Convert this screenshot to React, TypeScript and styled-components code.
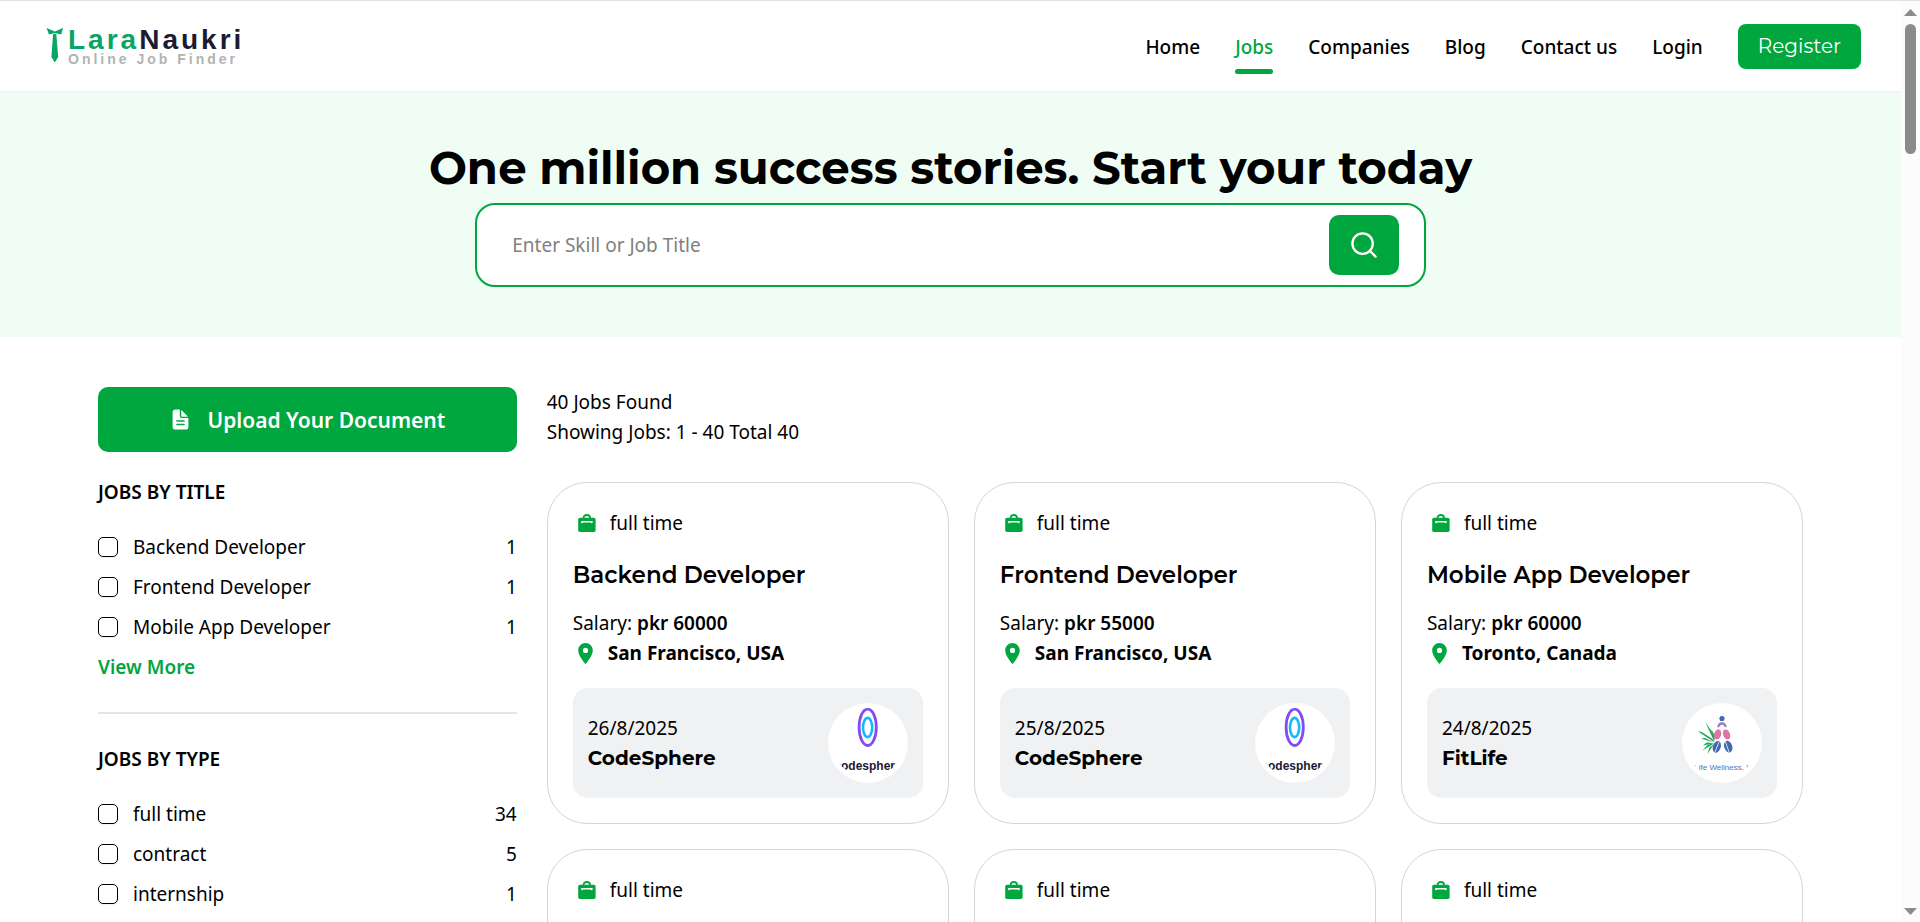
import React, { useId } from 'react';
import styled, { createGlobalStyle } from 'styled-components';
import { MdLocationOn } from 'react-icons/md';
import { IoDocumentText } from 'react-icons/io5';

const green = '#00a63e';
const display = 'Montserrat, Inter, sans-serif';

const GlobalStyle = createGlobalStyle`
  *, *::before, *::after { box-sizing: border-box; }
  body {
    margin: 0;
    background: #fff;
    color: #000;
    font: 400 19px/30px "Segoe UI", "Noto Sans", sans-serif;
  }
  h1, h2, h3, p, ul { margin: 0; padding: 0; }
  ul { list-style: none; }
  button, input { font: inherit; }
  button { border: 0; cursor: pointer; }
  a { color: inherit; text-decoration: none; }
`;

const Shell = styled.div`
  display: flex;
  height: 100vh;
  border-top: 1px solid #dbe5e0;
  overflow: hidden;
`;

const Page = styled.div`
  flex: 1;
  min-width: 0;
  overflow: hidden;
`;

const ScrollRail = styled.div`
  display: flex;
  flex-direction: column;
  align-items: center;
  width: 19px;
  padding: 8px 0 7px;
  background: #fcfcfc;
`;

const ScrollThumb = styled.div`
  width: 11px;
  height: 130px;
  margin: 8px 0 auto;
  border-radius: 6px;
  background: #8b8b8b;
`;

const Header = styled.header`
  display: flex;
  align-items: center;
  justify-content: space-between;
  height: 92px;
  padding: 0 40px 0 46px;
  border-bottom: 2px solid #f1f3f4;
`;

const Brand = styled.a`
  display: flex;
  gap: 4px;
  font-family: "Liberation Sans", Arial, sans-serif;
  font-weight: 700;
`;

const BrandWords = styled.span`
  display: flex;
  flex-direction: column;
`;

const BrandName = styled.span`
  color: #1b1b35;
  font-size: 28px;
  line-height: 26px;
  letter-spacing: 3px;

  em { color: #07a566; font-style: normal; }
`;

const BrandTagline = styled.span`
  color: #b3b3b3;
  font-size: 14px;
  line-height: 12px;
  letter-spacing: 3px;
`;

const Nav = styled.nav`
  display: flex;
  align-items: center;
  gap: 35px;
`;

const NavLink = styled.a<{ $active?: boolean }>`
  position: relative;
  padding-top: 2px;
  font-weight: 500;
  color: ${(p) => (p.$active ? green : '#000')};

  &::after {
    content: "";
    display: ${(p) => (p.$active ? 'block' : 'none')};
    position: absolute;
    inset: auto 0 -12px;
    height: 5px;
    border-radius: 3px;
    background: ${green};
  }
`;

const RegisterButton = styled.button`
  height: 45px;
  padding: 0 20px;
  border-radius: 8px;
  background: ${green};
  color: #fff;
  font-family: ${display};
  font-size: 20px;
`;

const Hero = styled.section`
  display: flex;
  flex-direction: column;
  align-items: center;
  gap: 10px;
  padding: 50px 0;
  background: #effdf4;
`;

const HeroTitle = styled.h1`
  font-family: ${display};
  font-size: 45px;
  font-weight: 700;
  line-height: 50px;
  text-align: center;
`;

const SearchBox = styled.form`
  display: flex;
  width: 50%;
  padding: 10px 25px 10px 35px;
  border: 2px solid ${green};
  border-radius: 20px;
  background: #fff;
`;

const SearchInput = styled.input`
  flex: 1;
  min-width: 0;
  padding: 0;
  border: 0;
  outline: 0;
  background: transparent;

  &::placeholder { color: #808080; opacity: 1; }
`;

const SearchButton = styled.button`
  display: grid;
  place-items: center;
  width: 70px;
  height: 60px;
  padding: 0;
  border-radius: 10px;
  background: ${green};
`;

const Main = styled.main`
  display: grid;
  grid-template-columns: minmax(0, 1fr) minmax(0, 3fr);
  gap: 30px;
  padding: 50px 98px;
`;

const Sidebar = styled.aside`
  display: flex;
  flex-direction: column;
  gap: 25px;
`;

const UploadButton = styled.button`
  display: flex;
  align-items: center;
  justify-content: center;
  gap: 15px;
  height: 65px;
  border-radius: 10px;
  background: ${green};
  color: #fff;
  font-size: 21px;
  font-weight: 600;
`;

const FilterGroup = styled.section`
  display: flex;
  flex-direction: column;
  gap: 25px;
`;

const FilterDivider = styled.hr`
  height: 2px;
  margin: 30px 0;
  border: 0;
  background: #e5e5e5;
`;

const FilterHeading = styled.h2`
  font-size: 19px;
  font-weight: 600;
  line-height: 30px;
`;

const FilterList = styled.ul`
  display: flex;
  flex-direction: column;
  gap: 10px;
`;

const FilterRow = styled.li`
  display: flex;
  align-items: center;
  gap: 15px;

  label { flex: 1; }
`;

const Checkbox = styled.input`
  appearance: none;
  width: 20px;
  height: 20px;
  margin: 0;
  border: 1px solid #000;
  border-radius: 5px;
  box-shadow: 0 1px 2px rgba(0, 0, 0, 0.06);

  &:checked { background: ${green}; }
`;

const ViewMore = styled.a`
  color: ${green};
  font-weight: 600;
`;

const Results = styled.section`
  display: flex;
  flex-direction: column;
  gap: 35px;
`;

const CardGrid = styled.div`
  display: grid;
  grid-template-columns: repeat(3, minmax(0, 1fr));
  grid-auto-rows: 1fr;
  gap: 25px;
`;

const Card = styled.article`
  padding: 25px;
  border: 1px solid #d1d5dc;
  border-radius: 40px;
`;

const JobType = styled.p`
  display: flex;
  align-items: center;
  gap: 14px;
  padding-left: 5px;
`;

const JobTitle = styled.h3`
  margin: 22px 0 18px;
  font-family: ${display};
  font-size: 23px;
  font-weight: 600;
  line-height: 30px;
`;

const Salary = styled.p`
  strong { font-weight: 600; }
`;

const Place = styled.p`
  display: flex;
  align-items: center;
  gap: 10px;
  font-weight: 700;

  svg { color: ${green}; }
`;

const CompanyBar = styled.footer`
  display: flex;
  align-items: center;
  justify-content: space-between;
  margin-top: 20px;
  padding: 15px;
  border-radius: 15px;
  background: #eff1f3;
`;

const CompanyName = styled.p`
  font-family: ${display};
  font-size: 20px;
  font-weight: 700;
`;

const Avatar = styled.span`
  display: grid;
  place-items: center;
  width: 80px;
  height: 80px;
  border-radius: 50%;
  background: #fff;

  svg { border-radius: 50%; }
`;

const TieMark = () => (
  <svg width="18" height="38" viewBox="0 0 18 38" aria-hidden="true">
    <path d="M0.5 1L8.8 4.6L17 1L15.2 7.6L10.8 6.4L10.4 8.2L12.2 30L8.8 35.5L5.4 30L7 8.2L6.6 6.4L3 7.6Z" fill="#07a566" />
    <path d="M6.8 6.6H10.8" stroke="#fff" strokeWidth="0.8" />
  </svg>
);

const SearchGlyph = () => (
  <svg width="26" height="26" viewBox="0 0 26 26" fill="none" stroke="#fff" strokeWidth="2.3" strokeLinecap="round" aria-hidden="true">
    <circle cx="11.6" cy="11.6" r="10.2" />
    <path d="M19 19L24.6 24.6" />
  </svg>
);

const BriefcaseGlyph = () => (
  <svg width="18" height="18" viewBox="0 0 18 18" aria-hidden="true">
    <path d="M5.6 4.8V3.6C5.6 2.2 6.8 1 8.8 1S12 2.2 12 3.6V4.8" fill="none" stroke={green} strokeWidth="1.8" />
    <rect x="0.2" y="3.8" width="17.4" height="14.2" rx="1.8" fill={green} />
    <path d="M3.2 6.9H14.6V8.4C14.6 9.6 13 9.6 12.8 8.5H5C4.8 9.6 3.2 9.6 3.2 8.4Z" fill="#fff" />
  </svg>
);

const Triangle = ({ down }: { down?: boolean }) => (
  <svg width="13" height="7" viewBox="0 0 13 7" aria-hidden="true">
    <path d={down ? 'M0 0H13L6.5 7Z' : 'M0 7H13L6.5 0Z'} fill="#8b8b8b" />
  </svg>
);

const CodeSphereLogo = () => (
  <svg width="70" height="70" viewBox="0 0 70 70" role="img" aria-label="CodeSphere">
    <ellipse cx="34.7" cy="19.3" rx="8.6" ry="18.2" fill="none" stroke="#7f4df5" strokeWidth="2.8" />
    <ellipse cx="34.6" cy="19.5" rx="4.6" ry="9.6" fill="none" stroke="#12b9fb" strokeWidth="2.6" />
    <text x="35" y="62" textAnchor="middle" fontFamily="Liberation Sans, sans-serif" fontWeight="700" fontSize="12" fill="#1c1734">codesphere</text>
  </svg>
);

const FitLifeLogo = () => (
  <svg width="70" height="70" viewBox="0 0 70 70" role="img" aria-label="FitLife">
    <g fill="#1fa657">
      <path d="M27.5 34L18.3 14.3L23.4 23.4Z M27.5 34L18.3 14.3L25.6 24.6Z" />
      <path d="M27 34L10.8 23.2L14.8 24L25.5 31Z" />
      <path d="M27 34.6L14 30.6L18 30Z" />
      <path d="M27 35.2L15.6 37.4L20 34.6Z" />
      <path d="M27 35.6L15.4 42.4L21 36.6Z" />
      <path d="M27 36L20.6 46L22.4 39.4Z" />
      <path d="M27 34L24.4 21.5L28 28Z" />
    </g>
    <path d="M32.3 10.8A2.7 2.9 0 0 1 37.7 10.8L36.6 13H33.4Z" fill="#3c69b3" />
    <path d="M30.4 19.4C30 12.4 40 12.4 39.6 19.4L37 18.2C36.4 16.4 33.6 16.4 33 18.2Z" fill="#a274b8" />
    <ellipse cx="30.6" cy="26.4" rx="3.5" ry="5.2" transform="rotate(18 30.6 26.4)" fill="#db77a6" />
    <ellipse cx="39.6" cy="26.4" rx="3.4" ry="5.2" transform="rotate(-22 39.6 26.4)" fill="#db77a6" />
    <ellipse cx="29.8" cy="38.8" rx="3.9" ry="6" transform="rotate(18 29.8 38.8)" fill="#4169b2" />
    <ellipse cx="41.2" cy="38.6" rx="4" ry="6" transform="rotate(-18 41.2 38.6)" fill="#4169b2" />
    <path d="M32 34L28 44M38.4 33.5L42 44" stroke="#fff" strokeWidth="0.8" />
    <text x="35" y="62" textAnchor="middle" fontFamily="Liberation Sans, sans-serif" fontSize="8" fill="#4f76b8">Fit Life Wellness, LLC</text>
  </svg>
);

interface Job {
  type: string;
  title?: string;
  salary?: string;
  place?: string;
  date?: string;
  company?: string;
  logo?: React.ReactNode;
}

const jobs: Job[] = [
  { type: 'full time', title: 'Backend Developer', salary: 'pkr 60000', place: 'San Francisco, USA', date: '26/8/2025', company: 'CodeSphere', logo: <CodeSphereLogo /> },
  { type: 'full time', title: 'Frontend Developer', salary: 'pkr 55000', place: 'San Francisco, USA', date: '25/8/2025', company: 'CodeSphere', logo: <CodeSphereLogo /> },
  { type: 'full time', title: 'Mobile App Developer', salary: 'pkr 60000', place: 'Toronto, Canada', date: '24/8/2025', company: 'FitLife', logo: <FitLifeLogo /> },
  { type: 'full time' },
  { type: 'full time' },
  { type: 'full time' },
];

const JobCard = ({ job }: { job: Job }) => (
  <Card>
    <JobType><BriefcaseGlyph />{job.type}</JobType>
    {job.title && (
      <>
        <JobTitle>{job.title}</JobTitle>
        <Salary>Salary: <strong>{job.salary}</strong></Salary>
        <Place><MdLocationOn size={25} />{job.place}</Place>
        <CompanyBar>
          <div>
            <p>{job.date}</p>
            <CompanyName>{job.company}</CompanyName>
          </div>
          <Avatar>{job.logo}</Avatar>
        </CompanyBar>
      </>
    )}
  </Card>
);

interface FilterProps {
  heading: string;
  options: [string, number][];
  more?: boolean;
}

const Filter = ({ heading, options, more }: FilterProps) => {
  const id = useId();
  return (
    <FilterGroup>
      <FilterHeading>{heading}</FilterHeading>
      <FilterList>
        {options.map(([label, count], i) => (
          <FilterRow key={label}>
            <Checkbox type="checkbox" id={`${id}-${i}`} />
            <label htmlFor={`${id}-${i}`}>{label}</label>
            <span>{count}</span>
          </FilterRow>
        ))}
        {more && <li><ViewMore href="#more">View More</ViewMore></li>}
      </FilterList>
    </FilterGroup>
  );
};

const links = ['Home', 'Jobs', 'Companies', 'Blog', 'Contact us', 'Login'];

export default function App() {
  return (
    <>
      <GlobalStyle />
      <Shell>
        <Page>
          <Header>
            <Brand href="#home">
              <TieMark />
              <BrandWords>
                <BrandName><em>Lara</em>Naukri</BrandName>
                <BrandTagline>Online Job Finder</BrandTagline>
              </BrandWords>
            </Brand>
            <Nav>
              {links.map((name) => (
                <NavLink key={name} href={`#${name}`} $active={name === 'Jobs'}>{name}</NavLink>
              ))}
              <RegisterButton type="button">Register</RegisterButton>
            </Nav>
          </Header>
          <Hero>
            <HeroTitle>One million success stories. Start your today</HeroTitle>
            <SearchBox onSubmit={(e) => e.preventDefault()}>
              <SearchInput type="text" placeholder="Enter Skill or Job Title" aria-label="Skill or job title" />
              <SearchButton type="submit" aria-label="Search"><SearchGlyph /></SearchButton>
            </SearchBox>
          </Hero>
          <Main>
            <Sidebar>
              <UploadButton type="button"><IoDocumentText size={23} />Upload Your Document</UploadButton>
              <div>
                <Filter heading="JOBS BY TITLE" more options={[['Backend Developer', 1], ['Frontend Developer', 1], ['Mobile App Developer', 1]]} />
                <FilterDivider />
                <Filter heading="JOBS BY TYPE" options={[['full time', 34], ['contract', 5], ['internship', 1]]} />
              </div>
            </Sidebar>
            <Results>
              <div>
                <p>40 Jobs Found</p>
                <p>Showing Jobs: 1 - 40 Total 40</p>
              </div>
              <CardGrid>
                {jobs.map((job, i) => <JobCard key={i} job={job} />)}
              </CardGrid>
            </Results>
          </Main>
        </Page>
        <ScrollRail aria-hidden="true">
          <Triangle />
          <ScrollThumb />
          <Triangle down />
        </ScrollRail>
      </Shell>
    </>
  );
}
